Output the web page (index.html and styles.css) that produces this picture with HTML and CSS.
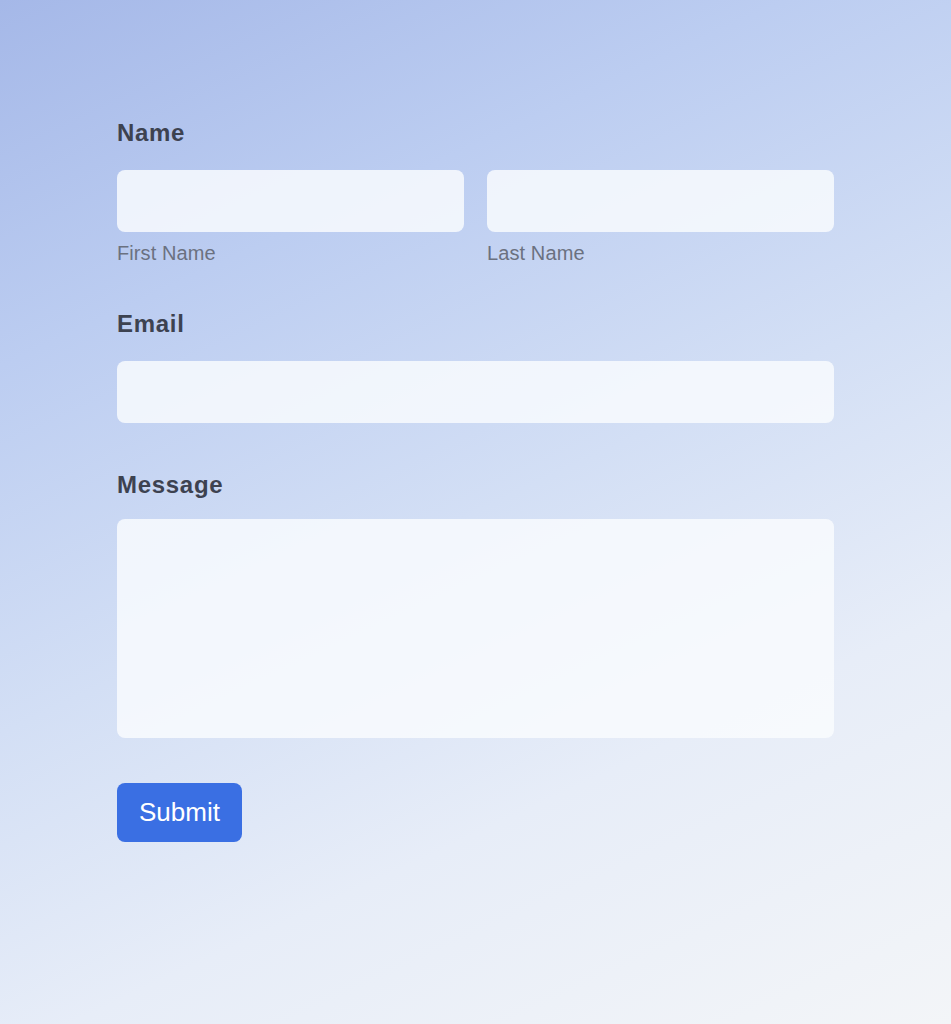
FILE: index.html
```html
<!DOCTYPE html>
<html>
<head>
<meta charset="utf-8">
<link rel="stylesheet" href="styles.css">
</head>
<body>
<div class="page">
  <form class="form">
    <div class="field">
      <div class="label">Name</div>
      <div class="row">
        <div class="col">
          <div class="input"></div>
          <div class="sub">First Name</div>
        </div>
        <div class="col">
          <div class="input"></div>
          <div class="sub">Last Name</div>
        </div>
      </div>
    </div>
    <div class="field">
      <div class="label">Email</div>
      <div class="input"></div>
    </div>
    <div class="field field-message">
      <div class="label label-tight">Message</div>
      <div class="input textarea"></div>
    </div>
    <div class="actions">
      <div class="button">Submit</div>
    </div>
  </form>
</div>
</body>
</html>
```
FILE: styles.css
```css
html, body {
  margin: 0;
  padding: 0;
}
body {
  width: 951px;
  height: 1024px;
  overflow: hidden;
  font-family: "Liberation Sans", Arial, sans-serif;
}
.page {
  width: 951px;
  height: 1024px;
  background: linear-gradient(155deg, #a5b8e8 0%, #bccdf1 25%, #d3dff5 50%, #e7edf8 72%, #f3f5f8 100%);
  box-sizing: border-box;
  padding: 116px 117px 0 117px;
}
.form {
  width: 717px;
  display: flex;
  flex-direction: column;
}
.field {
  display: flex;
  flex-direction: column;
}
.label {
  font-size: 24px;
  font-weight: 700;
  letter-spacing: 0.7px;
  color: #3d4250;
  line-height: 34px;
  margin-bottom: 20px;
}
.label-tight {
  margin-bottom: 17px;
}
.row {
  display: flex;
  gap: 23px;
}
.col {
  flex: 1;
  display: flex;
  flex-direction: column;
}
.input {
  height: 62px;
  border-radius: 8px;
  background: rgba(249, 251, 254, 0.84);
}
.textarea {
  height: 219px;
}
.sub {
  font-size: 20px;
  letter-spacing: 0.1px;
  color: #6b7180;
  line-height: 24px;
  margin-top: 9px;
}
.field + .field {
  margin-top: 42px;
}
.field-message {
  margin-top: 45px;
}
.field + .field-message {
  margin-top: 45px;
}
.actions {
  margin-top: 45px;
  display: flex;
}
.button {
  width: 125px;
  height: 59px;
  border-radius: 8px;
  background: #3a6fe3;
  color: #ffffff;
  font-size: 26px;
  display: flex;
  align-items: center;
  justify-content: center;
}
```
